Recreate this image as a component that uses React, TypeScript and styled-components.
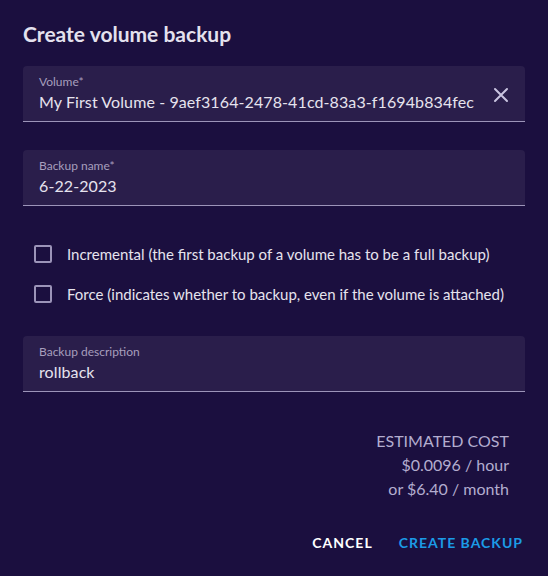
import React, { useState } from 'react'
import styled, { createGlobalStyle } from 'styled-components'

const GlobalStyle = createGlobalStyle`
	html, body {
		margin: 0;
		padding: 0;
		background: #1b0f3f;
	}
	body {
		font-family: Lato, "Open Sans", sans-serif;
		-webkit-font-smoothing: antialiased;
	}
`

const Dialog = styled.div`
	box-sizing: border-box;
	width: 548px;
	height: 576px;
	background: #1b0f3f;
	padding: 22px 23px 0 23px;
	display: flex;
	flex-direction: column;
`

const Title = styled.h2`
	margin: 0 0 20px 0;
	font-size: 21px;
	font-weight: 700;
	color: #e4e1ee;
	line-height: 24px;
`

const Field = styled.div<{ $gap?: number }>`
	position: relative;
	box-sizing: border-box;
	height: 56px;
	margin-bottom: ${(p) => p.$gap ?? 0}px;
	background: #2a1e4b;
	border-radius: 4px 4px 0 0;
	border-bottom: 1px solid #9c94b9;
	padding: 8px 16px 0 16px;
	display: flex;
	flex-direction: column;
`

const Label = styled.label`
	font-size: 12px;
	line-height: 16px;
	color: #a79fbd;
`

const Value = styled.div`
	font-size: 16px;
	letter-spacing: 0.1px;
	line-height: 23px;
	color: #e6e3ee;
	white-space: nowrap;
`

const ClearButton = styled.button`
	position: absolute;
	right: 12px;
	top: 17px;
	width: 24px;
	height: 24px;
	padding: 0;
	border: none;
	background: transparent;
	color: #c9c4e0;
	cursor: pointer;
	display: flex;
	align-items: center;
	justify-content: center;
`

const Options = styled.div`
	display: flex;
	flex-direction: column;
	gap: 22px;
	padding: 39px 0 33px 11px;
`

const CheckRow = styled.label`
	display: flex;
	align-items: center;
	gap: 15px;
	cursor: pointer;
	font-size: 15px;
	line-height: 18px;
	color: #e6e3ee;
`

const Box = styled.span<{ $checked: boolean }>`
	box-sizing: border-box;
	width: 18px;
	height: 18px;
	border: 2px solid #9c94b9;
	border-radius: 2px;
	background: ${(p) => (p.$checked ? '#9c94b9' : 'transparent')};
`

const Cost = styled.div`
	margin-top: 37px;
	padding-right: 16px;
	text-align: right;
	font-size: 16px;
	line-height: 24px;
	color: #b3adcf;
`

const CostTitle = styled.div`
	text-transform: uppercase;
`

const Actions = styled.div`
	display: flex;
	justify-content: flex-end;
	gap: 26px;
	margin-top: 33px;
	padding-right: 2px;
`

const ActionButton = styled.button<{ $primary?: boolean }>`
	border: none;
	background: transparent;
	padding: 0;
	font-family: inherit;
	font-size: 14px;
	font-weight: 700;
	letter-spacing: 1px;
	text-transform: uppercase;
	color: ${(p) => (p.$primary ? '#1b9be6' : '#ffffff')};
	cursor: pointer;
`

const App: React.FC = () => {
	const [incremental, setIncremental] = useState(false)
	const [force, setForce] = useState(false)

	return (
		<Dialog>
			<GlobalStyle />
			<Title>Create volume backup</Title>
			<Field $gap={28}>
				<Label>Volume*</Label>
				<Value>My First Volume - 9aef3164-2478-41cd-83a3-f1694b834fec</Value>
				<ClearButton aria-label="clear">
					<svg width="18" height="18" viewBox="0 0 18 18">
						<path d="M3 3 L15 15 M15 3 L3 15" stroke="currentColor" strokeWidth="2" strokeLinecap="round" />
					</svg>
				</ClearButton>
			</Field>
			<Field>
				<Label>Backup name*</Label>
				<Value>6-22-2023</Value>
			</Field>
			<Options>
				<CheckRow onClick={() => setIncremental(!incremental)}>
					<Box $checked={incremental} />
					Incremental (the first backup of a volume has to be a full backup)
				</CheckRow>
				<CheckRow onClick={() => setForce(!force)}>
					<Box $checked={force} />
					Force (indicates whether to backup, even if the volume is attached)
				</CheckRow>
			</Options>
			<Field>
				<Label>Backup description</Label>
				<Value>rollback</Value>
			</Field>
			<Cost>
				<CostTitle>Estimated cost</CostTitle>
				<div>$0.0096 / hour</div>
				<div>or $6.40 / month</div>
			</Cost>
			<Actions>
				<ActionButton>Cancel</ActionButton>
				<ActionButton $primary>Create backup</ActionButton>
			</Actions>
		</Dialog>
	)
}

export default App
